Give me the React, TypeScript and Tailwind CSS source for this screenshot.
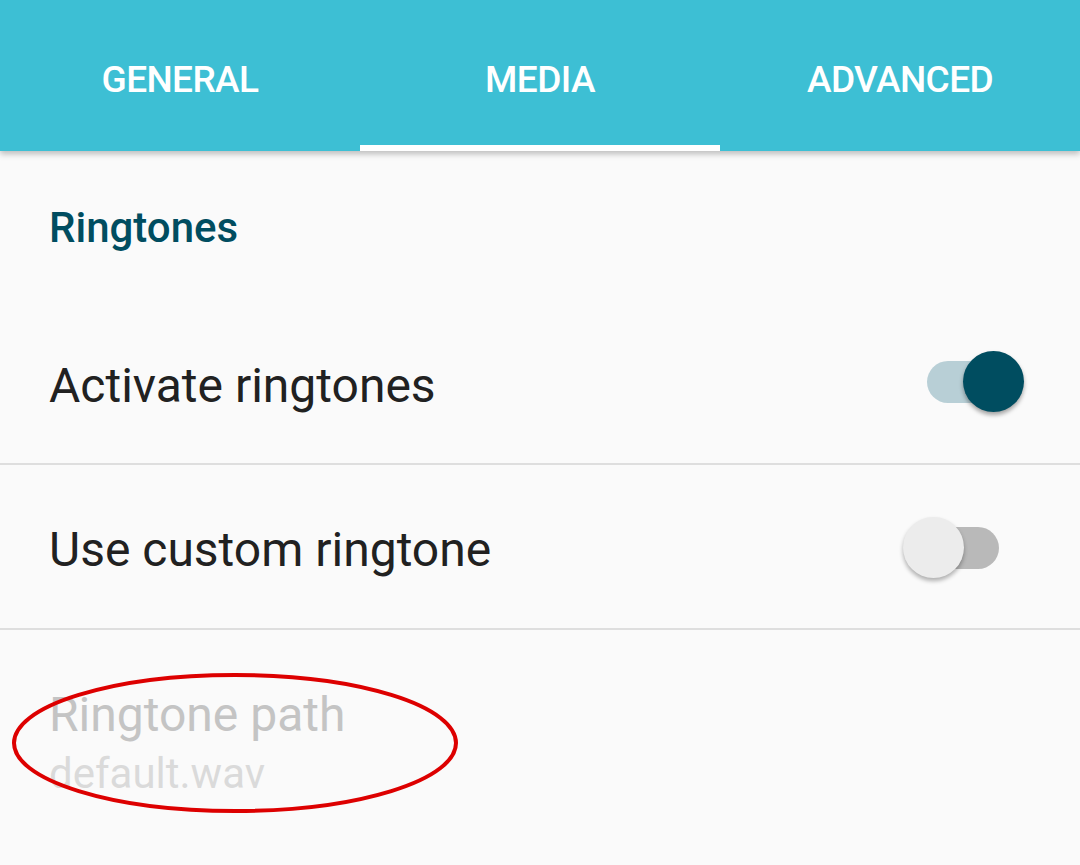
const TABS = ["GENERAL", "MEDIA", "ADVANCED"];

function Toggle({ on }: { on: boolean }) {
  return (
    <div className="relative h-[62px] w-[122px]">
      <div
        className={
          on
            ? "absolute left-[26px] top-[10px] h-[42px] w-[74px] rounded-full bg-[#b8cfd6]"
            : "absolute left-[26px] top-[10px] h-[42px] w-[72px] rounded-full bg-[#b9b9b9]"
        }
      />
      <div
        className={
          on
            ? "absolute left-[62px] top-0 h-[61px] w-[61px] rounded-full bg-[#004d60] shadow-[0_3px_4px_rgba(0,0,0,0.35)]"
            : "absolute left-[2px] top-0 h-[61px] w-[61px] rounded-full bg-[#ececec] shadow-[0_3px_4px_rgba(0,0,0,0.3)]"
        }
      />
    </div>
  );
}

export default function App() {
  return (
    <div className="relative h-[865px] w-[1080px] overflow-hidden bg-[#fafafa] font-['Roboto',sans-serif]">
      <div className="relative z-10 grid h-[151px] grid-cols-3 bg-[#3dbfd4] shadow-[0_3px_6px_rgba(0,0,0,0.25)]">
        {TABS.map((t) => (
          <div key={t} className="relative flex items-center justify-center pt-[8px]">
            <span className="text-[37px] font-medium tracking-[-0.6px] text-white">{t}</span>
            {t === "MEDIA" && <div className="absolute bottom-0 left-0 h-[6px] w-full bg-white" />}
          </div>
        ))}
      </div>

      <div className="flex h-[149px] items-center px-[49px] pt-[4px]">
        <span className="text-[42px] font-medium text-[#004d60]">Ringtones</span>
      </div>

      <div className="flex h-[165px] items-center justify-between border-b-[2px] border-[#dedede] pl-[49px] pr-[57px]">
        <span className="pt-[8px] text-[48px] text-[#212121]">Activate ringtones</span>
        <Toggle on />
      </div>

      <div className="flex h-[165px] items-center justify-between border-b-[2px] border-[#dedede] pl-[49px] pr-[57px]">
        <span className="pt-[6px] text-[48px] text-[#212121]">Use custom ringtone</span>
        <div className="pt-[2px]">
          <Toggle on={false} />
        </div>
      </div>

      <div className="flex flex-col px-[49px] pt-[55px]">
        <span className="text-[48px] leading-[60px] text-[#c4c4c4]">Ringtone path</span>
        <span className="text-[42px] leading-[58px] text-[#dadada]">default.wav</span>
      </div>

      <svg className="absolute left-0 top-[660px]" width="480" height="170" viewBox="0 0 480 170">
        <ellipse cx="235" cy="83" rx="221" ry="68" fill="none" stroke="#dd0000" strokeWidth="4" />
      </svg>
    </div>
  );
}
